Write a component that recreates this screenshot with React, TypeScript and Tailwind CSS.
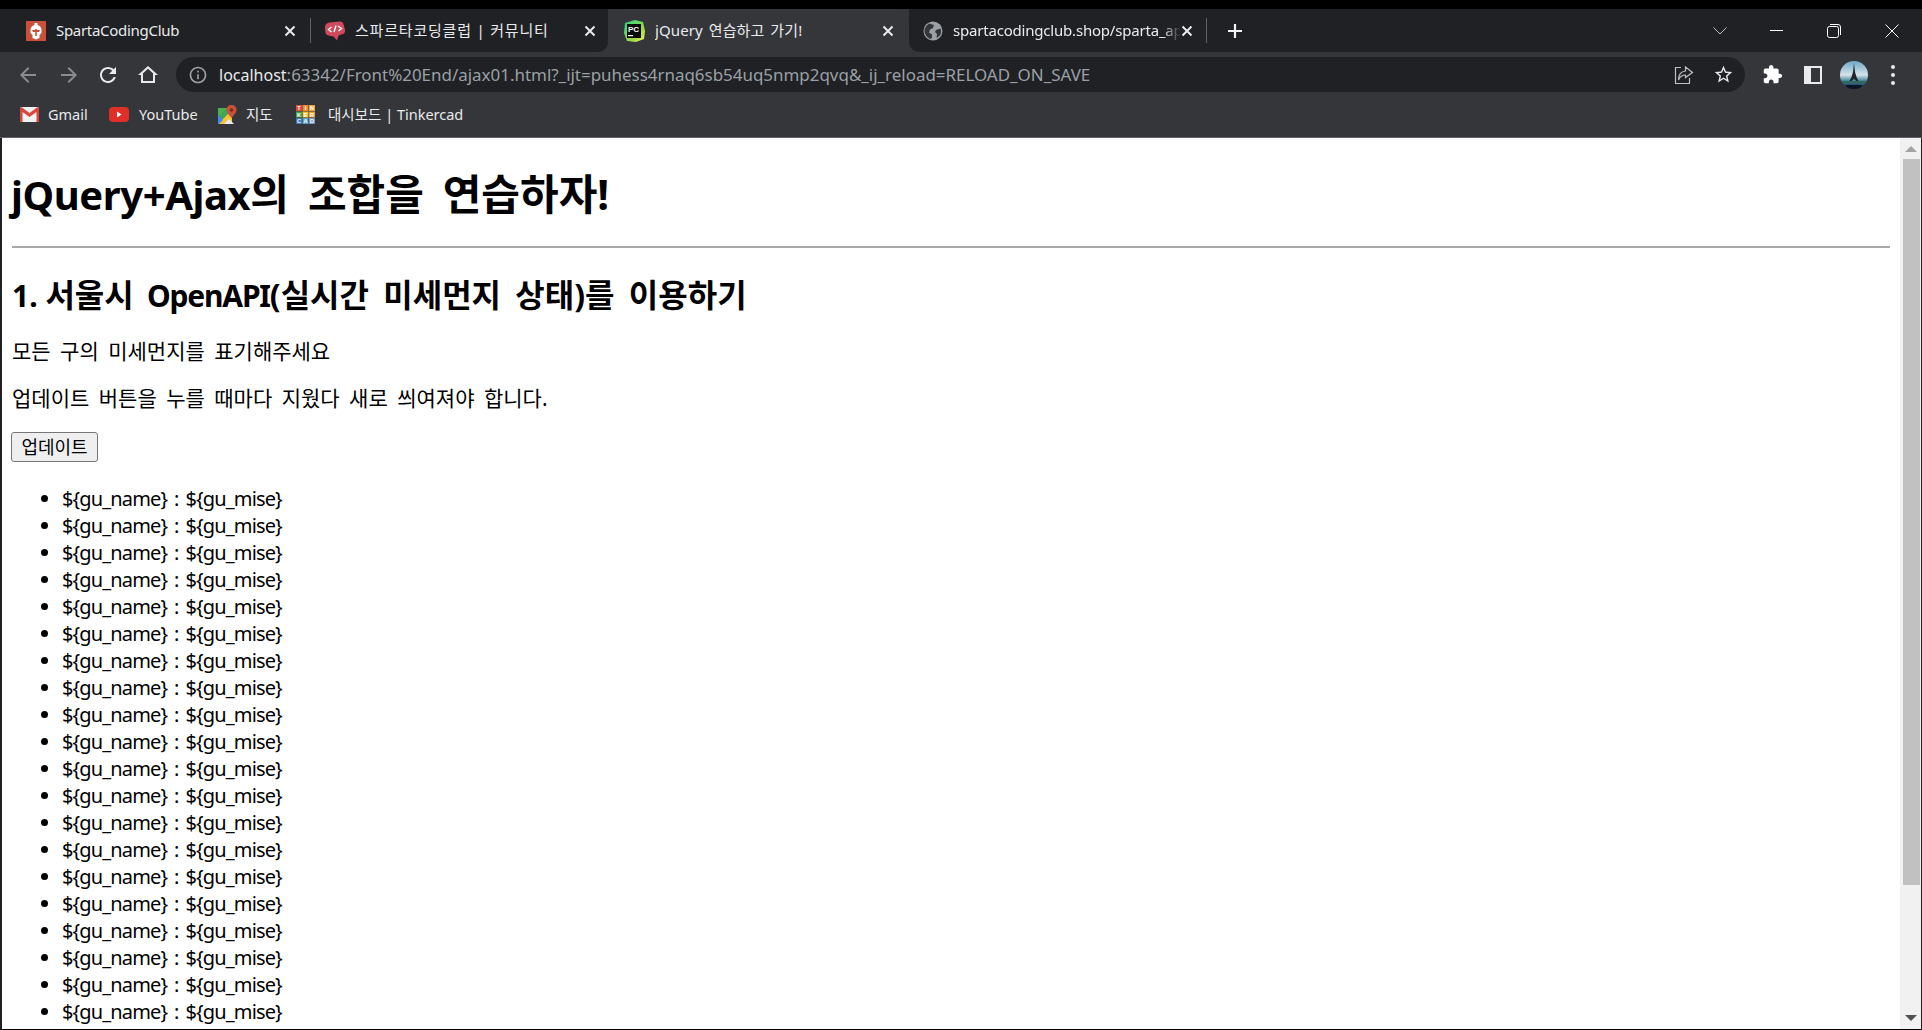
const FONT = '[font-family:"Noto_Sans","Noto_Sans_CJK_KR",sans-serif]'

const Close = () => (
    <svg width="12" height="12" viewBox="0 0 12 12" className="shrink-0" fill="none" stroke="#e8eaed" strokeWidth="2">
        <path d="M1.5 1.5l9 9M10.5 1.5l-9 9" />
    </svg>
)

const SpartaIcon = () => (
    <svg width="20" height="20" viewBox="0 0 20 20" className="shrink-0">
        <rect width="20" height="20" fill="#c9503a" />
        <path d="M8.500 2h3v2c2.500.6 4 2.500 4 5v3l-2 2v3l-3.500 1.500L6.500 17v-3l-2-2V9c0-2.500 1.500-4.400 4-5z" fill="#fff" />
        <path d="M9.200 8h1.600v7H9.200zM6 9h3.200v2H7zM10.800 9H14l-1 2h-2.200z" fill="#c9503a" />
    </svg>
)

const CommunityIcon = () => (
    <svg width="20" height="20" viewBox="0 0 20 20" className="shrink-0">
        <path d="M4 1.500L15 .5c2 0 3 1 3.500 2.500L20 9c.4 2-.5 3.500-2 4l-4.500 1.500-1.500 5-3.500-4-5-1C1.500 14 .5 13 .3 11L0 6c0-2 1.500-4 4-4.500z" fill="#d04a5c" />
        <path d="M6.500 6L3.500 8.500l3 2.500M13 5l3.500 2.500-3 2.500M11 4.500L9 11" fill="none" stroke="#fff" strokeWidth="1.400" />
    </svg>
)

const PyCharmIcon = () => (
    <svg width="22" height="22" viewBox="0 0 22 22" className="shrink-0">
        <defs>
            <linearGradient id="pc" x1="0" y1="0" x2="1" y2="1">
                <stop offset="0" stopColor="#21d789" />
                <stop offset="0.6" stopColor="#8fd84a" />
                <stop offset="1" stopColor="#fcf84a" />
            </linearGradient>
        </defs>
        <path d="M2 3l10-3 8 2 2 9-1 8-8 3-9-1-3-8z" fill="url(#pc)" />
        <rect x="4" y="4" width="14" height="14" fill="#0c0c0c" />
        <text x="5" y="11.500" fontSize="8" fontWeight="700" fill="#fff" fontFamily="Liberation Sans, sans-serif">PC</text>
        <rect x="5" y="15" width="5" height="1.200" fill="#fff" />
    </svg>
)

const GlobeIcon = () => (
    <svg width="20" height="20" viewBox="0 0 20 20" className="shrink-0">
        <circle cx="10" cy="10" r="9.500" fill="#9aa0a6" />
        <path d="M6 2.500l5 1.500-1 3-3 1.500-1 3 3 2v3.500l-2 1C3.500 16 1.500 13 1.500 10 1.500 7 3.500 4 6 2.500zM13 9l4.500-1.500c.8 2 .8 5-.5 7L13.500 17l.5-4-2-2z" fill="#35363a" />
    </svg>
)

const GmailIcon = () => (
    <svg width="19" height="15" viewBox="0 0 19 15" className="shrink-0">
        <rect width="19" height="15" rx="1.500" fill="#f1f1f1" />
        <path d="M0 1.500C0 .5 1 0 2 .5l7.500 5.500L17 .5c1-.5 2 0 2 1V15h-2.500V5L9.500 10 2.500 5v10H0z" fill="#d9463b" />
    </svg>
)

const YoutubeIcon = () => (
    <svg width="20" height="15" viewBox="0 0 20 15" className="shrink-0">
        <rect width="20" height="15" rx="4" fill="#e02f26" />
        <path d="M8 4.500l4.500 3-4.500 3z" fill="#fff" />
    </svg>
)

const MapsIcon = () => (
    <svg width="19" height="19" viewBox="0 0 19 19" className="shrink-0">
        <path d="M0 3h14v16H0z" fill="#3fa45b" />
        <path d="M0 19L14 5v14z" fill="#f4c534" />
        <path d="M0 3h9L0 12z" fill="#4caf50" />
        <path d="M0 10l5 5-4 4H0z" fill="#4285f4" />
        <path d="M6 19l5-5 5 5z" fill="#e8eaed" />
        <path d="M13.500 0C10.700 0 8.500 2 8.500 4.800c0 3.200 5 8.200 5 8.200s5-5 5-8.200C18.500 2 16.300 0 13.500 0z" fill="#c9503a" />
        <circle cx="13.500" cy="5" r="1.800" fill="#7b2a20" />
    </svg>
)

const tinkerCells = [
    ['T', '#e0483a'],
    ['I', '#e98a2e'],
    ['N', '#e9a23a'],
    ['K', '#49a447'],
    ['E', '#f1c232'],
    ['R', '#e9a23a'],
    ['C', '#3f74b5'],
    ['A', '#5aa0c8'],
    ['D', '#6f96b8'],
]

const TinkercadIcon = () => (
    <svg width="19" height="19" viewBox="0 0 19 19" className="shrink-0">
        {tinkerCells.map(([l, c], i) => {
            const x = (i % 3) * 6.500
            const y = Math.floor(i / 3) * 6.500
            return (
                <g key={i}>
                    <rect x={x} y={y} width="6" height="6" fill={c} />
                    <text x={x + 3} y={y + 5} fontSize="5.500" fontWeight="700" textAnchor="middle" fill="#fff" fontFamily="Liberation Sans, sans-serif">{l}</text>
                </g>
            )
        })}
    </svg>
)

const Avatar = () => (
    <svg width="28" height="28" viewBox="0 0 28 28">
        <defs>
            <linearGradient id="sky" x1="0" y1="0" x2="0" y2="1">
                <stop offset="0" stopColor="#6ea7c6" />
                <stop offset="0.5" stopColor="#d5e3e8" />
                <stop offset="0.72" stopColor="#3d7f98" />
                <stop offset="1" stopColor="#111c30" />
            </linearGradient>
            <clipPath id="av">
                <circle cx="14" cy="14" r="14" />
            </clipPath>
        </defs>
        <g clipPath="url(#av)">
            <rect width="28" height="28" fill="url(#sky)" />
            <path d="M14 2l1 9 1.500 5 2 4h-2l-2.500-2-2.500 2h-2l2-4 1.500-5z" fill="#1c2530" />
            <path d="M0 20h28v2H0z" fill="#2f6a5a" />
            <path d="M6 24h16v4H6z" fill="#0b1426" />
        </g>
    </svg>
)

type TabProps = {
    icon: React.ReactNode
    title: string
    className: string
    titleClass?: string
}

const Tab = ({ icon, title, className, titleClass = '' }: TabProps) => (
    <div className={`flex items-center h-full shrink-0 ${className}`}>
        {icon}
        <span className={`ml-[10px] flex-1 min-w-0 overflow-hidden whitespace-nowrap text-[15px] text-[#e8eaed] ${titleClass}`}>
            {title}
        </span>
        <Close />
    </div>
)

const ChromeBtn = ({ d, color, size = 24 }: { d: string; color: string; size?: number }) => (
    <svg width={size} height={size} viewBox="0 0 24 24" fill={color} className="shrink-0">
        <path d={d} />
    </svg>
)

const Bookmark = ({ icon, label, className }: { icon: React.ReactNode; label: string; className: string }) => (
    <div className={`flex items-center shrink-0 ${className}`}>
        {icon}
        <span className="text-[14.500px] text-[#e8eaed] whitespace-nowrap">{label}</span>
    </div>
)

export default function App() {
    const rows = Array.from({ length: 20 })

    return (
        <div className={`w-[1922px] h-[1030px] overflow-hidden flex flex-col bg-black ${FONT}`}>
            <div className="h-[9px] shrink-0 bg-black" />

            {/* tab strip */}
            <div className="h-[43px] shrink-0 flex bg-[#35363a]">
                <div className="flex items-center w-[608px] h-full bg-[#202124] rounded-br-[10px] shrink-0">
                    <Tab icon={<SpartaIcon />} title="SpartaCodingClub" titleClass="tracking-[-0.3px]" className="w-[310px] pl-[26px] pr-[14px]" />
                    <div className="w-px h-[25px] bg-[#5f6368] shrink-0" />
                    <Tab icon={<CommunityIcon />} title="스파르타코딩클럽 | 커뮤니티" titleClass="tracking-[0.8px]" className="w-[297px] pl-[14px] pr-[12px]" />
                </div>
                <div className="w-[301px] h-full shrink-0 rounded-t-[10px] bg-[#35363a]">
                    <Tab icon={<PyCharmIcon />} title="jQuery 연습하고 가기!" titleClass="tracking-[0.1px] [word-spacing:2px] -ml-[2px]" className="w-full pl-[15px] pr-[15px]" />
                </div>
                <div className="flex-1 flex items-center h-full bg-[#202124] rounded-bl-[10px]">
                    <Tab icon={<GlobeIcon />} title="spartacodingclub.shop/sparta_api" titleClass="tracking-[-0.2px] [mask-image:linear-gradient(to_right,black_92%,transparent)]" className="w-[297px] pl-[14px] pr-[13px]" />
                    <div className="w-px h-[25px] bg-[#5f6368] shrink-0" />
                    <div className="ml-[20px] shrink-0">
                        <svg width="16" height="16" viewBox="0 0 16 16" stroke="#f1f3f4" strokeWidth="2.200">
                            <path d="M8 1v14M1 8h14" />
                        </svg>
                    </div>
                    <div className="flex-1" />
                    <svg width="14" height="8" viewBox="0 0 14 8" fill="none" stroke="#bdc1c6" className="shrink-0">
                        <path d="M.5.500L7 7l6.500-6.500" />
                    </svg>
                    <div className="w-[43px] shrink-0" />
                    <div className="w-[13px] h-px bg-white shrink-0" />
                    <div className="w-[44px] shrink-0" />
                    <svg width="14" height="14" viewBox="0 0 14 14" fill="none" stroke="#fff" className="shrink-0">
                        <rect x=".5" y="2.500" width="11" height="11" rx="2" />
                        <path d="M3 .5h8a2.500 2.500 0 012.500 2.500v8" />
                    </svg>
                    <div className="w-[44px] shrink-0" />
                    <svg width="14" height="14" viewBox="0 0 14 14" stroke="#fff" className="shrink-0">
                        <path d="M.5.500l13 13M13.500.5l-13 13" />
                    </svg>
                    <div className="w-[23px] shrink-0" />
                </div>
            </div>

            {/* toolbar */}
            <div className="h-[43px] shrink-0 flex items-center bg-[#35363a] pt-[2px]">
                <div className="w-[16px] shrink-0" />
                <ChromeBtn color="#8a8c90" d="M20 11H7.830l5.590-5.590L12 4l-8 8 8 8 1.410-1.410L7.830 13H20v-2z" />
                <div className="w-[17px] shrink-0" />
                <ChromeBtn color="#8a8c90" d="M12 4l-1.410 1.410L16.170 11H4v2h12.170l-5.580 5.590L12 20l8-8z" />
                <div className="w-[15px] shrink-0" />
                <ChromeBtn color="#e8eaed" d="M17.650 6.350C16.200 4.900 14.210 4 12 4c-4.420 0-7.990 3.580-7.990 8s3.570 8 7.990 8c3.730 0 6.840-2.550 7.730-6h-2.080c-.82 2.330-3.040 4-5.650 4-3.310 0-6-2.690-6-6s2.690-6 6-6c1.660 0 3.140.69 4.220 1.780L13 11h7V4l-2.350 2.350z" />
                <div className="w-[16px] shrink-0" />
                <ChromeBtn color="#e8eaed" d="M12 5.690l5 4.500V18H7v-7.810l5-4.500M12 3L2 12h3v8h14v-8h3L12 3z" />
                <div className="w-[16px] shrink-0" />

                <div className="w-[1569px] h-[35px] shrink-0 flex items-center rounded-full bg-[#202124] pl-[12px]">
                    <ChromeBtn size={20} color="#9aa0a6" d="M11 7h2v2h-2zm0 4h2v6h-2zm1-9C6.480 2 2 6.480 2 12s4.480 10 10 10 10-4.480 10-10S17.520 2 12 2zm0 18c-4.410 0-8-3.590-8-8s3.590-8 8-8 8 3.590 8 8-3.590 8-8 8z" />
                    <span className="ml-[11px] text-[16px] whitespace-nowrap text-[#e8eaed]">
                        localhost<span className="text-[16.950px] text-[#9aa0a6]">:63342/Front%20End/ajax01.html?_ijt=puhess4rnaq6sb54uq5nmp2qvq&_ij_reload=RELOAD_ON_SAVE</span>
                    </span>
                    <div className="flex-1" />
                    <svg width="20" height="20" viewBox="0 0 20 20" fill="none" stroke="#bdc1c6" strokeWidth="1.200" className="shrink-0">
                        <path d="M7 2.500H1.500v16h14V13" />
                        <path d="M11.500 2l7 5.500-7 5V10C8 10 6 11.500 4.500 15c0-5 2.500-8.500 7-9z" />
                    </svg>
                    <div className="w-[19px] shrink-0" />
                    <ChromeBtn size={21} color="#e8eaed" d="M22 9.240l-7.190-.62L12 2 9.190 8.630 2 9.240l5.460 4.730L5.820 21 12 17.270 18.180 21l-1.630-7.030L22 9.240zM12 15.400l-3.760 2.270 1-4.280-3.320-2.880 4.380-.38L12 6.100l1.710 4.040 4.380.38-3.320 2.880 1 4.280L12 15.400z" />
                    <div className="w-[11px] shrink-0" />
                </div>

                <div className="w-[17px] shrink-0" />
                <ChromeBtn size={21} color="#fff" d="M20.500 11H19V7c0-1.100-.9-2-2-2h-4V3.500C13 2.120 11.880 1 10.500 1S8 2.120 8 3.500V5H4c-1.100 0-1.990.9-1.990 2v3.800H3.500c1.490 0 2.700 1.210 2.700 2.700s-1.210 2.700-2.700 2.700H2V20c0 1.100.9 2 2 2h3.800v-1.500c0-1.490 1.210-2.700 2.700-2.700 1.490 0 2.700 1.210 2.700 2.700V22H17c1.100 0 2-.9 2-2v-4h1.500c1.380 0 2.500-1.120 2.500-2.500S21.880 11 20.500 11z" />
                <div className="w-[21px] shrink-0" />
                <div className="w-[18px] h-[18px] shrink-0 flex justify-end bg-[#e8eaed] p-[2px]">
                    <div className="w-[9px] h-full bg-[#35363a]" />
                </div>
                <div className="w-[18px] shrink-0" />
                <Avatar />
                <div className="w-[23px] shrink-0" />
                <div className="flex flex-col gap-[4px] shrink-0">
                    <div className="w-[4px] h-[4px] rounded-full bg-[#e8eaed]" />
                    <div className="w-[4px] h-[4px] rounded-full bg-[#e8eaed]" />
                    <div className="w-[4px] h-[4px] rounded-full bg-[#e8eaed]" />
                </div>
            </div>

            {/* bookmarks bar */}
            <div className="h-[43px] shrink-0 flex items-center bg-[#35363a] pl-[20px] border-b border-b-[#5f6368] pb-[3px]">
                <Bookmark icon={<GmailIcon />} label="Gmail" className="w-[89px] gap-[9px]" />
                <Bookmark icon={<YoutubeIcon />} label="YouTube" className="w-[109px] gap-[10px]" />
                <Bookmark icon={<MapsIcon />} label="지도" className="w-[78px] gap-[9px]" />
                <Bookmark icon={<TinkercadIcon />} label="대시보드 | Tinkercad" className="w-[180px] gap-[13px]" />
            </div>

            {/* page */}
            <div className="flex-1 min-h-0 flex pb-[1px]">
                <div className="w-[2px] shrink-0 bg-[#202124]" />
                <div className="flex-1 min-w-0 bg-white overflow-hidden pl-[10px] pr-[10px] text-black">
                    <h1 className="mt-[29px] -ml-px text-[40px] leading-[53px] font-bold whitespace-nowrap">
                        <span className="tracking-[-0.4px]">jQuery+Ajax</span>
                        <span className="text-[42px] [word-spacing:8px]">의 조합을 연습하자!</span>
                    </h1>
                    <hr className="mt-[25px] border-t-2 border-t-[#a9a9a9]" />
                    <h2 className="mt-[27px] text-[30px] leading-[40px] font-bold whitespace-nowrap">
                        1. <span className="text-[32px] [word-spacing:5px]">서울시 </span>
                        <span className="tracking-[-1.2px]">OpenAPI</span>
                        <span className="text-[32px] [word-spacing:6px]">(실시간 미세먼지 상태)를 이용하기</span>
                    </h2>
                    <p className="mt-[22px] text-[21px] leading-[27px] [word-spacing:4px]">모든 구의 미세먼지를 표기해주세요</p>
                    <p className="mt-[20px] text-[21px] leading-[27px] [word-spacing:4px]">업데이트 버튼을 누를 때마다 지웠다 새로 씌여져야 합니다.</p>
                    <button className="mt-[20px] block w-[87px] h-[30px] -ml-px border border-[#767676] rounded-[3px] bg-[#efefef] text-[18px] leading-none">업데이트</button>
                    <ul className="mt-[23px] pl-[50px] list-disc text-[20px] leading-[27px] tracking-[-0.85px] [word-spacing:2.500px]">
                        {rows.map((_, i) => (
                            <li key={i}>{'${gu_name} : ${gu_mise}'}</li>
                        ))}
                    </ul>
                </div>
                <div className="w-[21px] shrink-0 flex flex-col items-center bg-[#f1f1f1] pl-[1px]">
                    <svg width="12" height="6" viewBox="0 0 12 6" className="mt-[8px] shrink-0" fill="#a3a3a3">
                        <path d="M6 0l6 6H0z" />
                    </svg>
                    <div className="mt-[7px] w-[17px] h-[726px] shrink-0 bg-[#c1c1c1]" />
                    <div className="flex-1" />
                    <svg width="12" height="6" viewBox="0 0 12 6" className="mb-[8px] shrink-0" fill="#505050">
                        <path d="M0 0h12L6 6z" />
                    </svg>
                </div>
                <div className="w-px shrink-0 bg-[#202124]" />
            </div>
        </div>
    )
}
